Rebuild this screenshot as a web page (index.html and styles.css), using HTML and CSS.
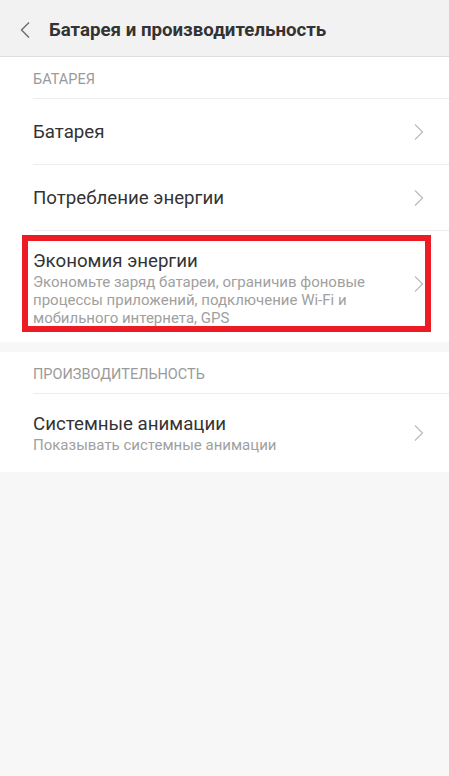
FILE: index.html
```html
<!DOCTYPE html>
<html lang="ru">
<head>
    <meta charset="UTF-8">
    <meta name="viewport" content="width=device-width, initial-scale=1.0">
    <title>Батарея и производительность</title>
    <link rel="stylesheet" href="styles.css">
</head>
<body>
    <header class="topbar">
        <svg class="back" width="10" height="16" viewBox="0 0 10 16">
            <polyline points="9,0.5 1.5,8 9,15.5" fill="none" stroke="#6b6b6b" stroke-width="1.4"/>
        </svg>
        <h1>Батарея и производительность</h1>
    </header>

    <section class="group">
        <div class="group-title">БАТАРЕЯ</div>
        <div class="item">
            <div class="item-text">
                <div class="item-name">Батарея</div>
            </div>
            <svg class="arrow" width="10" height="16" viewBox="0 0 10 16">
                <polyline points="1,0.5 8.5,8 1,15.5" fill="none" stroke="#bdbdbd" stroke-width="1.3"/>
            </svg>
        </div>
        <div class="item">
            <div class="item-text">
                <div class="item-name">Потребление энергии</div>
            </div>
            <svg class="arrow" width="10" height="16" viewBox="0 0 10 16">
                <polyline points="1,0.5 8.5,8 1,15.5" fill="none" stroke="#bdbdbd" stroke-width="1.3"/>
            </svg>
        </div>
        <div class="item-marked">
            <div class="marked-box">
                <div class="item-text">
                    <div class="item-name">Экономия энергии</div>
                    <div class="item-desc">Экономьте заряд батареи, ограничив фоновые процессы приложений, подключение Wi-Fi и мобильного интернета, GPS</div>
                </div>
                <svg class="arrow" width="10" height="16" viewBox="0 0 10 16">
                    <polyline points="1,0.5 8.5,8 1,15.5" fill="none" stroke="#bdbdbd" stroke-width="1.3"/>
                </svg>
            </div>
        </div>
    </section>

    <section class="group">
        <div class="group-title">ПРОИЗВОДИТЕЛЬНОСТЬ</div>
        <div class="item item-last">
            <div class="item-text">
                <div class="item-name">Системные анимации</div>
                <div class="item-desc">Показывать системные анимации</div>
            </div>
            <svg class="arrow" width="10" height="16" viewBox="0 0 10 16">
                <polyline points="1,0.5 8.5,8 1,15.5" fill="none" stroke="#bdbdbd" stroke-width="1.3"/>
            </svg>
        </div>
    </section>
</body>
</html>
```

FILE: styles.css
```css
body {
    margin: 0;
    padding: 0;
    font-family: Roboto, 'Noto Sans', sans-serif;
    background-color: #f7f7f7;
    color: #333;
}

.topbar {
    display: flex;
    align-items: center;
    height: 57px;
    padding: 3px 0 0 20px;
    box-sizing: border-box;
    background-color: #f2f2f2;
    border-bottom: 1px solid #dedede;
}

.topbar .back {
    margin-right: 19px;
}

.topbar h1 {
    margin: 0;
    font-size: 18.7px;
    font-weight: 700;
    color: #333;
}

.group {
    background: white;
    margin-bottom: 10px;
}

.group-title {
    height: 42px;
    margin-left: 33px;
    padding-top: 14px;
    box-sizing: border-box;
    font-size: 14.5px;
    color: #9a9a9a;
    border-bottom: 1px solid #ececec;
}

.item {
    display: flex;
    align-items: center;
    height: 66px;
    margin-left: 33px;
    padding-right: 25px;
    box-sizing: border-box;
    border-bottom: 1px solid #ececec;
}

.item-last {
    height: 78px;
    border-bottom: none;
}

.item-text {
    flex: 1;
    padding-right: 20px;
}

.item-name {
    font-size: 18.7px;
    line-height: 24px;
    color: #333;
}

.item-desc {
    font-size: 15px;
    line-height: 18px;
    color: #a0a0a0;
}

.item-marked {
    padding: 4px 18px 10px 22px;
}

.marked-box {
    display: flex;
    align-items: center;
    height: 97px;
    padding: 0 1px 0 5px;
    box-sizing: border-box;
    border: 6px solid #ed1c24;
}

.marked-box .item-text {
    align-self: flex-start;
    padding-top: 8px;
}
```
